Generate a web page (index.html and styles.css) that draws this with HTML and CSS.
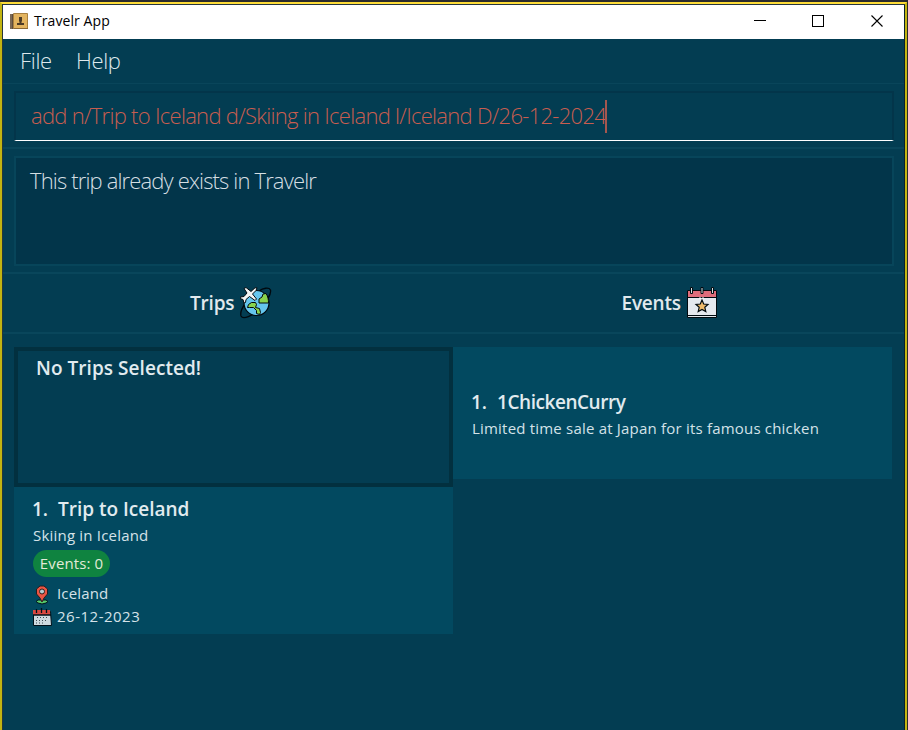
FILE: index.html
```
<!DOCTYPE html>
<html lang="en">
<head>
<meta charset="utf-8">
<title>Travelr App</title>
<link rel="stylesheet" href="styles.css">
</head>
<body>
<div class="desktop">
<div class="window">
  <header class="titlebar">
    <svg class="app-icon" width="18" height="17" viewBox="0 0 18 17">
      <path d="M0 1h4v15H0z" fill="#5d4c3c"/><path d="M1 1v15" stroke="#988570"/>
      <path d="M3.5.5h14v15h-14z" fill="#e3b45f" stroke="#a9803e"/><path d="M4 15.5h14" stroke="#8a6835"/>
      <path d="M9 4h3v4l-.5 1v1H14v2H7v-2h2.500V9L9 8z" fill="#4c3b26"/>
    </svg>
    <span class="title">Travelr App</span>
    <div class="controls">
      <svg width="130" height="12" viewBox="0 0 130 12" fill="none" stroke="#000">
        <path d="M0 5.500h12M58.500.5h11v11h-11z" shape-rendering="crispEdges"/><path d="M117.500.5l11 11m0-11l-11 11" stroke-width="1.100"/>
      </svg>
    </div>
  </header>
  <nav class="menu"><span class="file">File</span><span class="help">Help</span></nav>
  <section class="command-pane"><div class="command"><span class="command-text">add n/Trip to Iceland d/Skiing in Iceland l/Iceland D/26-12-2024</span><i class="caret"></i></div></section>
  <section class="result-pane"><div class="result"><span>This trip already exists in Travelr</span></div></section>
  <section class="headings">
    <div class="heading trips"><span>Trips</span>
      <svg width="32" height="32" viewBox="0 0 32 32" stroke-linejoin="round">
        <path d="M19 4C23 1 29 0 30.500 3c1 4-4 12-11 19S3 33 1 29c-1-4 1-8 4-12" fill="none" stroke="#00090f" stroke-width="1.300"/>
        <circle cx="16.500" cy="16" r="12.500" fill="#65c5ed" stroke="#00090f" stroke-width="1.200"/>
        <path d="M19 15v-3l3-2 1-3 3-.5c2 3 2.500 6 2.500 9.500h-9.500zM7.500 20.500l1-3 3-2h4l1 2-1 3 4 1 1 4-1 2-3-1v-3l-3-3h-4z" fill="#88d34d" stroke="#00090f"/>
        <path d="M4 1.500L6 .5l5 4L15 .8h2l-1 2.700-3.500 3.500 4 5-1.500 1.500-5.500-4L6 12.500l-.5 3-1.500.5-1-3.500-3-1 .5-1.500 3.500-.5 3-3.500z" fill="#f3f5f5" stroke="#00090f"/>
      </svg>
    </div>
    <div class="heading events"><span>Events</span>
      <svg width="32" height="32" viewBox="0 0 32 32">
        <path d="M1.500 3.500h29v27h-29z" fill="#e5e9ef" stroke="#000a10"/><path d="M2 4h28v6H2z" fill="#df6d7b"/><path d="M1 10.500h30M2 28.500h28" stroke="#000a10"/>
        <path d="M4.500.5h2v6h-2zm10.500 0h2v6h-2zm10.500 0h2v6h-2z" fill="#d9e3e5" stroke="#000a10"/>
        <path d="M14 10v2m3-2v2" stroke="#fff"/>
        <path d="M16 13l1.700 4 4.300.5-3.200 2.800 1 4.200-3.800-2-3.800 2 1-4.200L10 17.500l4.300-.5z" fill="#efbb6c" stroke="#000a10" stroke-width="1.200"/>
      </svg>
    </div>
  </section>
  <main class="lists">
    <div class="list">
      <article class="selected"><h2>No Trips Selected!</h2></article>
      <article class="trip">
        <h2><span class="number">1.</span><span class="trip-name">Trip to Iceland</span></h2>
        <p class="description">Skiing in Iceland</p>
        <span class="badge">Events: 0</span>
        <p class="meta place"><svg width="18" height="20" viewBox="0 0 18 20">
          <path d="M5 15h8l2 1.500-2 1.500-4 1-4-1-2-1.500z" fill="#55c96b" stroke="#00141b"/>
          <path d="M9 17l-2-4-3.500-4V4L7 1h4l3.500 3v5L11 13z" fill="#ea5543" stroke="#261d20"/><circle cx="9" cy="6.500" r="2.500" fill="#b6cbd0" stroke="#31201e"/>
        </svg><span>Iceland</span></p>
        <p class="meta date"><svg width="19" height="19" viewBox="0 0 19 19">
          <path d="M.5 3.500h17l1 14H.5z" fill="#cdd9df" stroke="#001019"/><path d="M0 2h17v5H0z" fill="#d94840"/><path d="M0 7h18M3.500 1v4m5-5v5m5-4v4" stroke="#001019" stroke-width="1.300"/>
          <path d="M4 9.500h12M3 12.500h12M3 15h9" stroke="#3d4d55" stroke-dasharray="1 2"/>
        </svg><span>26-12-2023</span></p>
      </article>
    </div>
    <div class="list">
      <article class="event">
        <h2><span class="number">1.</span><span class="event-name">1ChickenCurry</span></h2>
        <p class="sale">Limited time sale at Japan for its famous chicken</p>
      </article>
    </div>
  </main>
</div>
</div>
</body>
</html>
```
FILE: styles.css
```
* { box-sizing: border-box; }
body { margin: 0; background: #292a2c; font-family: "Open Sans", "Noto Sans", sans-serif; overflow: hidden; }
.desktop { height: 730px; padding: 2px 1px 0 0; }
.window { height: 728px; border: solid #c2b411; border-width: 2px 2px 0; border-top-color: #fddb38; background: #033d52; box-shadow: inset 1px 1px #26363c, inset -1px 0 #07212c; padding: 1px 1px 0; display: flex; flex-direction: column; }
p, h2 { margin: 0; }
svg { display: block; flex: none; }
span { white-space: nowrap; }
.titlebar { height: 34px; background: #fff; display: flex; align-items: center; padding: 0 20px 2px 7px; color: #000; }
.app-icon { margin-right: 6px; }
.title { font-size: 14px; line-height: 20px; letter-spacing: .08px; }
.controls { margin-left: auto; }
.menu { height: 45px; border-bottom: 1px solid #09455a; padding-left: 17px; display: flex; gap: 24px; font-size: 22px; font-weight: 300; line-height: 43px; letter-spacing: -.3px; color: #dfe9ed; }
.command-pane { height: 65px; padding: 7px 10px 0 11px; border-bottom: 2px solid #09465b; }
.command { height: 50px; border: 2px solid #03354a; border-bottom: 1px solid #fff; padding-left: 15px; display: flex; align-items: center; color: #c85d50; font-size: 22px; font-weight: 300; }
.command-text { letter-spacing: -.71px; line-height: 44px; padding-bottom: 3px; }
.caret { width: 2px; height: 33px; margin-left: -1px; background: #a4574f; }
.result-pane { height: 125px; padding: 7px 10px 0 11px; border-bottom: 2px solid #09465b; }
.result { height: 110px; background: #02354a; border: 2px solid #07455a; padding-left: 14px; color: #d5dfe3; font-size: 22px; font-weight: 300; line-height: 44px; letter-spacing: -.85px; }
.headings { height: 60px; border-bottom: 2px solid #09465b; display: grid; grid-template-columns: 1fr 1fr; }
.heading { display: flex; align-items: center; color: #e1e9ed; font-size: 19px; font-weight: 600; letter-spacing: -.2px; }
.heading svg { margin-left: 5px; }
.trips { padding-left: 187px; }
.trips svg { margin-left: 6px; }
.events { padding-left: 168px; }
.lists { margin: 13px 13px 0 11px; display: grid; grid-template-columns: 439px 439px; align-items: start; }
h2 { font-size: 19px; font-weight: 600; line-height: 26px; color: #e1ebef; }
.selected { height: 140px; border: 4px solid #02303f; padding: 4px 18px; }
.selected h2 { letter-spacing: .05px; }
.trip, .event { background: #024960; padding-left: 19px; color: #d4e2e8; font-size: 15px; }
.trip { height: 147px; padding-top: 9px; }
.trip h2, .event h2 { display: flex; margin-left: -1px; }
.number { width: 26px; }
.event-name { letter-spacing: -.45px; }
.description, .sale { line-height: 26px; letter-spacing: .2px; }
.badge { display: block; width: 77px; height: 27px; margin-top: 2px; border-radius: 14px; background: #0f8340; line-height: 27px; text-align: center; letter-spacing: .1px; color: #e2ead8; }
.meta { display: flex; align-items: center; height: 23px; }
.meta span { margin-left: 6px; padding-bottom: 3px; letter-spacing: .15px; }
.place { margin-top: 6px; }
.date svg { margin-right: -1px; }
.date span { letter-spacing: .5px; }
.event { height: 132px; padding-top: 42px; }
```
